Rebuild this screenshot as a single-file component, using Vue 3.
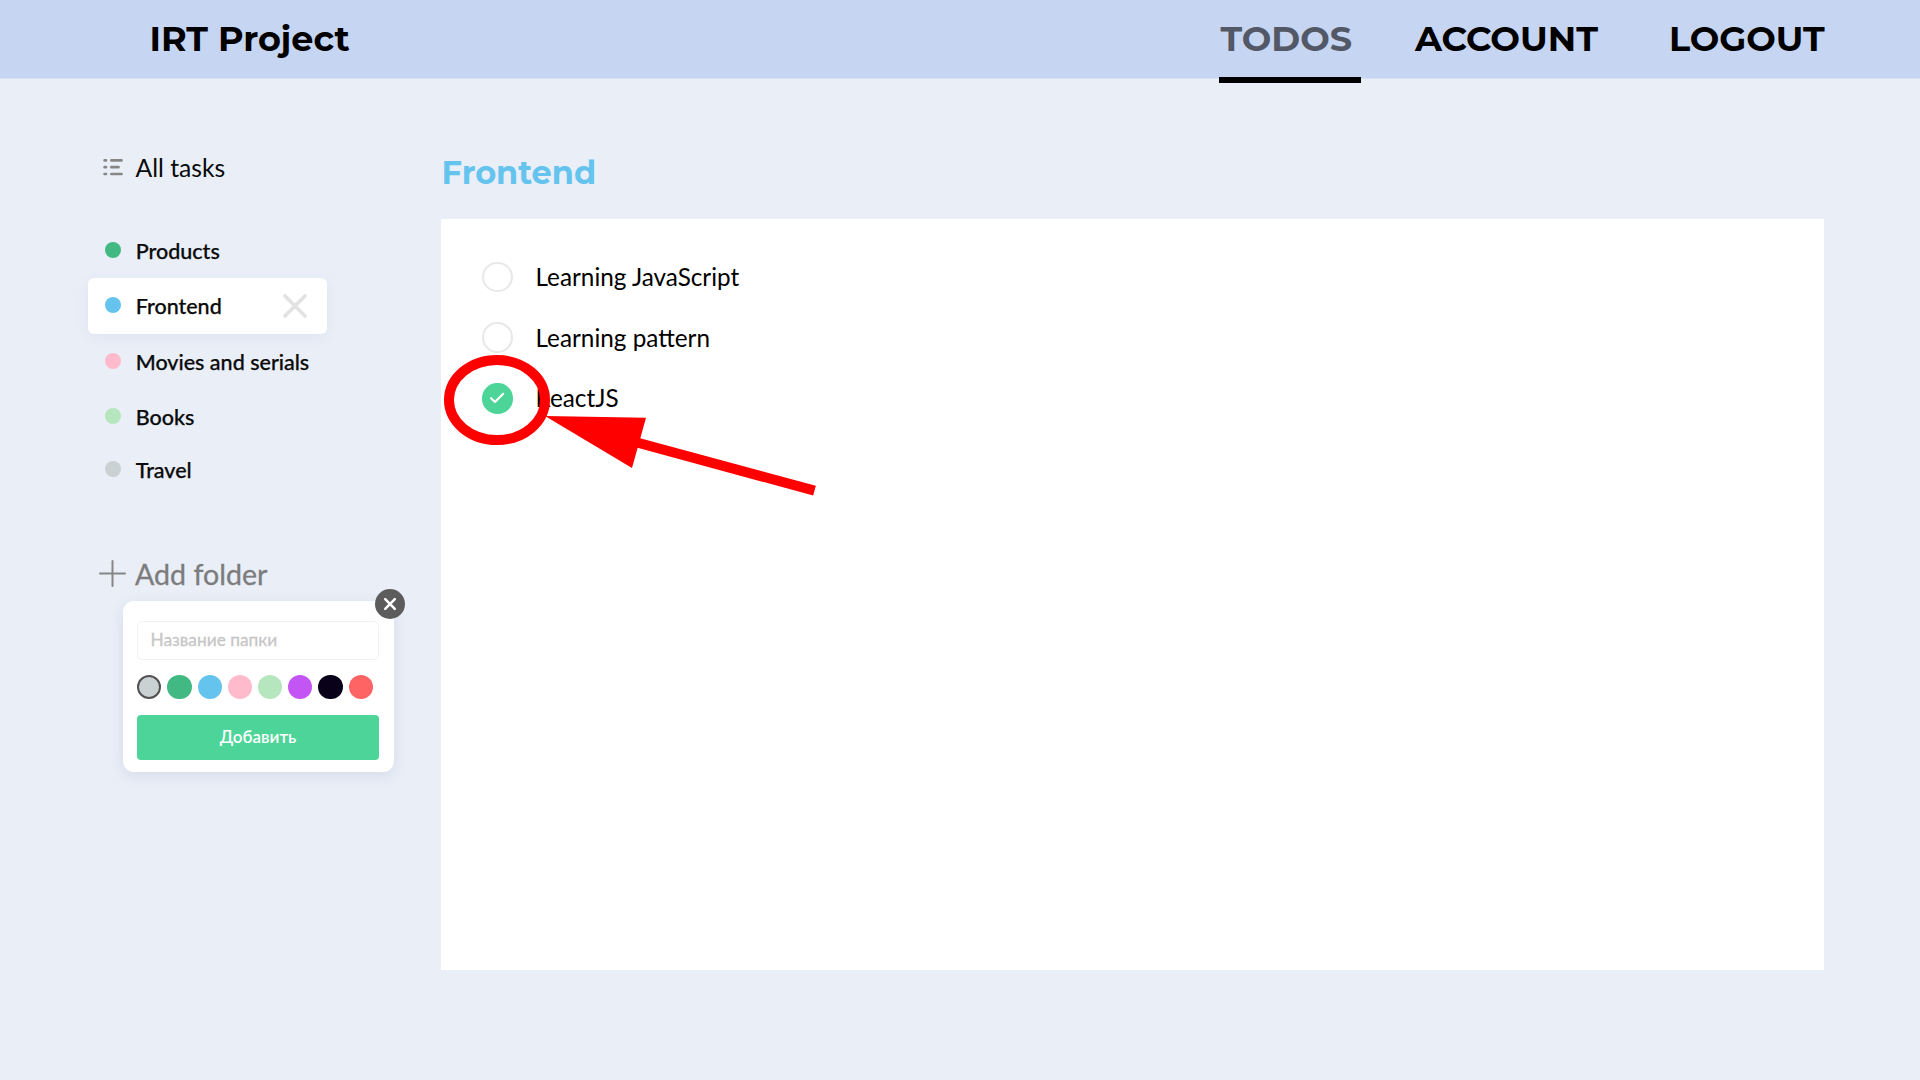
<script setup>
const nav = [
  { label: 'TODOS', active: true, cls: 'nav-todos' },
  { label: 'ACCOUNT', cls: 'nav-account' },
  { label: 'LOGOUT', cls: 'nav-logout' }
]
const folders = [
  { name: 'Products', color: '#42b883' },
  { name: 'Frontend', color: '#64c4ed', active: true },
  { name: 'Movies and serials', color: '#ffbbcc' },
  { name: 'Books', color: '#b6e6bd' },
  { name: 'Travel', color: '#c9d1d3' }
]
const swatches = ['#c9d1d3', '#42b883', '#64c4ed', '#ffbbcc', '#b6e6bd', '#c355f5', '#09011a', '#ff6464']
const tasks = [
  { text: 'Learning JavaScript' },
  { text: 'Learning pattern' },
  { text: 'ReactJS', done: true }
]
</script>

<template>
  <div class="page">
    <header class="header">
      <div class="brand">IRT Project</div>
      <nav class="nav">
        <a v-for="n in nav" :key="n.label" class="nav-item" :class="[n.cls, { active: n.active }]">{{ n.label }}</a>
      </nav>
    </header>
    <main class="main">
      <i class="divider"></i>
      <aside class="sidebar">
        <div class="all-tasks">
          <svg width="20" height="18" viewBox="0 0 20 18" fill="none" stroke="#868686" stroke-width="2.7" stroke-linecap="round">
            <path d="M1.6 2.4H3M1.6 9.2H3M1.6 16H3M8.4 2.4H18.5M8.4 9.2H15.5M8.4 16H18.5" />
          </svg>
          <span>All tasks</span>
        </div>
        <ul class="folders">
          <li v-for="f in folders" :key="f.name" class="folder" :class="{ active: f.active }">
            <i class="dot" :style="{ background: f.color }"></i>
            <span class="folder-name">{{ f.name }}</span>
            <svg v-if="f.active" class="remove" width="26" height="26" viewBox="0 0 26 26" stroke="#e2e2e2" stroke-width="3.8" stroke-linecap="round">
              <path d="M3 3L23 23M23 3L3 23" />
            </svg>
          </li>
        </ul>
        <div class="add">
          <svg width="27" height="27" viewBox="0 0 27 27" stroke="#868686" stroke-width="2" stroke-linecap="round">
            <path d="M13.5 1V26M1 13.5H26" />
          </svg>
          <span>Add folder</span>
        </div>
        <div class="popup">
          <button class="close">
            <svg width="14" height="14" viewBox="0 0 14 14" stroke="#fff" stroke-width="2.5" stroke-linecap="round">
              <path d="M2.2 2.2L11.8 11.8M11.8 2.2L2.2 11.8" />
            </svg>
          </button>
          <div class="field">Название папки</div>
          <div class="swatches">
            <i v-for="(c, i) in swatches" :key="c" class="swatch" :class="{ selected: i === 0 }" :style="{ background: c }"></i>
          </div>
          <button class="submit">Добавить</button>
        </div>
      </aside>
      <section class="content">
        <h1>Frontend</h1>
        <div class="board">
          <div v-for="t in tasks" :key="t.text" class="task">
            <i class="check" :class="{ done: t.done }">
              <svg v-if="t.done" width="16" height="12" viewBox="0 0 16 12" fill="none" stroke="#fff" stroke-width="2.1" stroke-linecap="round" stroke-linejoin="round">
                <path d="M2.1 6.2L6 10L14.2 1.7" />
              </svg>
            </i>
            <span>{{ t.text }}</span>
          </div>
        </div>
      </section>
    </main>
    <svg class="annotation" width="372" height="142" viewBox="0 0 372 142">
      <ellipse cx="53" cy="45" rx="48" ry="40" fill="none" stroke="#f00" stroke-width="10" />
      <path d="M101 61L202 62.7L188 113Z" fill="#f00" />
      <path d="M193 87.5L370.5 135.7" fill="none" stroke="#f00" stroke-width="10" />
    </svg>
  </div>
</template>

<style>
body { margin: 0; }
</style>

<style scoped>
.page { position: relative; width: 1920px; height: 1080px; overflow: hidden; background: #e9eef7; color: #0a0a0a; font-family: Lato, sans-serif; display: flex; flex-direction: column; }
.header { flex: none; height: 79px; box-sizing: border-box; background: #c6d5f2; display: flex; justify-content: space-between; padding: 0 95px 0 149.5px; font: 700 35px/78px Montserrat, Inter, sans-serif; color: #000; border-bottom: 1px solid #d8e2f5; }
.nav { display: flex; }
.nav-item { box-sizing: border-box; height: 83px; flex: none; }
.nav-todos { width: 142px; margin-right: 54px; padding-left: 1.5px; }
.nav-account { width: 202px; margin-right: 52px; font-size: 35.2px; }
.nav-logout { width: 156px; }
.nav-item.active { border-bottom: 6px solid #000; color: #525866; }
.main { position: relative; flex: 1; display: flex; }
.divider { position: absolute; left: 268px; top: 17px; width: 1px; height: 700px; background: #ecedf5; }
.sidebar { position: relative; width: 353px; flex: none; padding-left: 88px; }
.all-tasks { display: flex; align-items: center; gap: 12.5px; height: 30px; margin: 73px 0 0 15px; font-size: 24.7px; }
.all-tasks span { margin-top: 1px; }
.folders { list-style: none; margin: 40.5px 0 0; padding: 0; }
.folder { display: flex; align-items: center; width: 239px; height: 55.5px; box-sizing: border-box; padding: 0 19px 0 17px; border-radius: 6px; font-size: 21.5px; font-weight: 500; white-space: nowrap; -webkit-text-stroke: .25px currentColor; }
.folder-name { padding-top: 1px; }
.folder:last-child { height: 49.5px; }
.folder.active { background: #fff; box-shadow: 0 3px 14px rgba(60, 80, 120, .06); }
.dot { flex: none; width: 16px; height: 16px; border-radius: 50%; margin: -1.4px 14.4px 0 .3px; }
.remove { margin-left: auto; }
.add { display: flex; align-items: center; gap: 9px; height: 34px; margin: 62px 0 0 11px; font-size: 28.6px; color: #7c7c7c; -webkit-text-stroke: .3px currentColor; }
.add span { margin-top: 2px; }
.popup { position: relative; width: 270.5px; height: 171px; margin: 11px 0 0 35px; box-sizing: border-box; padding: 20px 14.5px 0 14px; background: #fff; border-radius: 11px; box-shadow: 0 4px 14px rgba(60, 80, 120, .1); }
.close { position: absolute; right: -11.5px; top: -12px; width: 30px; height: 30px; border-radius: 50%; border: 0; padding: 0; background: #5c5c5c; display: flex; align-items: center; justify-content: center; }
.field { height: 39px; box-sizing: border-box; border: 1.5px solid #f2f2f2; border-radius: 5px; padding-left: 12.5px; font-size: 17.3px; line-height: 36.5px; color: #c6c6c6; -webkit-text-stroke: .3px currentColor; }
.swatches { display: flex; gap: 6px; margin: 15px 0 0 .3px; }
.swatch { flex: none; width: 24.2px; height: 24.2px; box-sizing: border-box; border-radius: 50%; }
.swatch.selected { border: 2px solid #525252; }
.submit { display: block; width: 242px; height: 45px; margin-top: 16px; border: 0; border-radius: 4px; background: #4dd599; color: #fff; font: 600 17px/42px Lato, sans-serif; padding: 0 0 1px; }
.content { width: 1383px; }
h1 { margin: 71px 0 0; height: 46px; padding-left: .5px; font: 700 32px/46px Montserrat, Inter, sans-serif; color: #64c4ed; }
.board { margin-top: 23px; height: 751px; box-sizing: border-box; padding: 43px 0 0 41px; background: #fff; }
.task { display: flex; align-items: center; height: 30px; margin-bottom: 30.7px; font-size: 24.3px; color: #000; }
.task span { margin-top: -1.2px; }
.check { width: 30.5px; height: 30.5px; box-sizing: border-box; border: 2.5px solid #e8e8e8; border-radius: 50%; margin-right: 23px; display: flex; align-items: center; justify-content: center; flex: none; }
.check.done { border: 0; background: #4dd599; }
.annotation { position: absolute; left: 444px; top: 355px; overflow: visible; }
</style>
